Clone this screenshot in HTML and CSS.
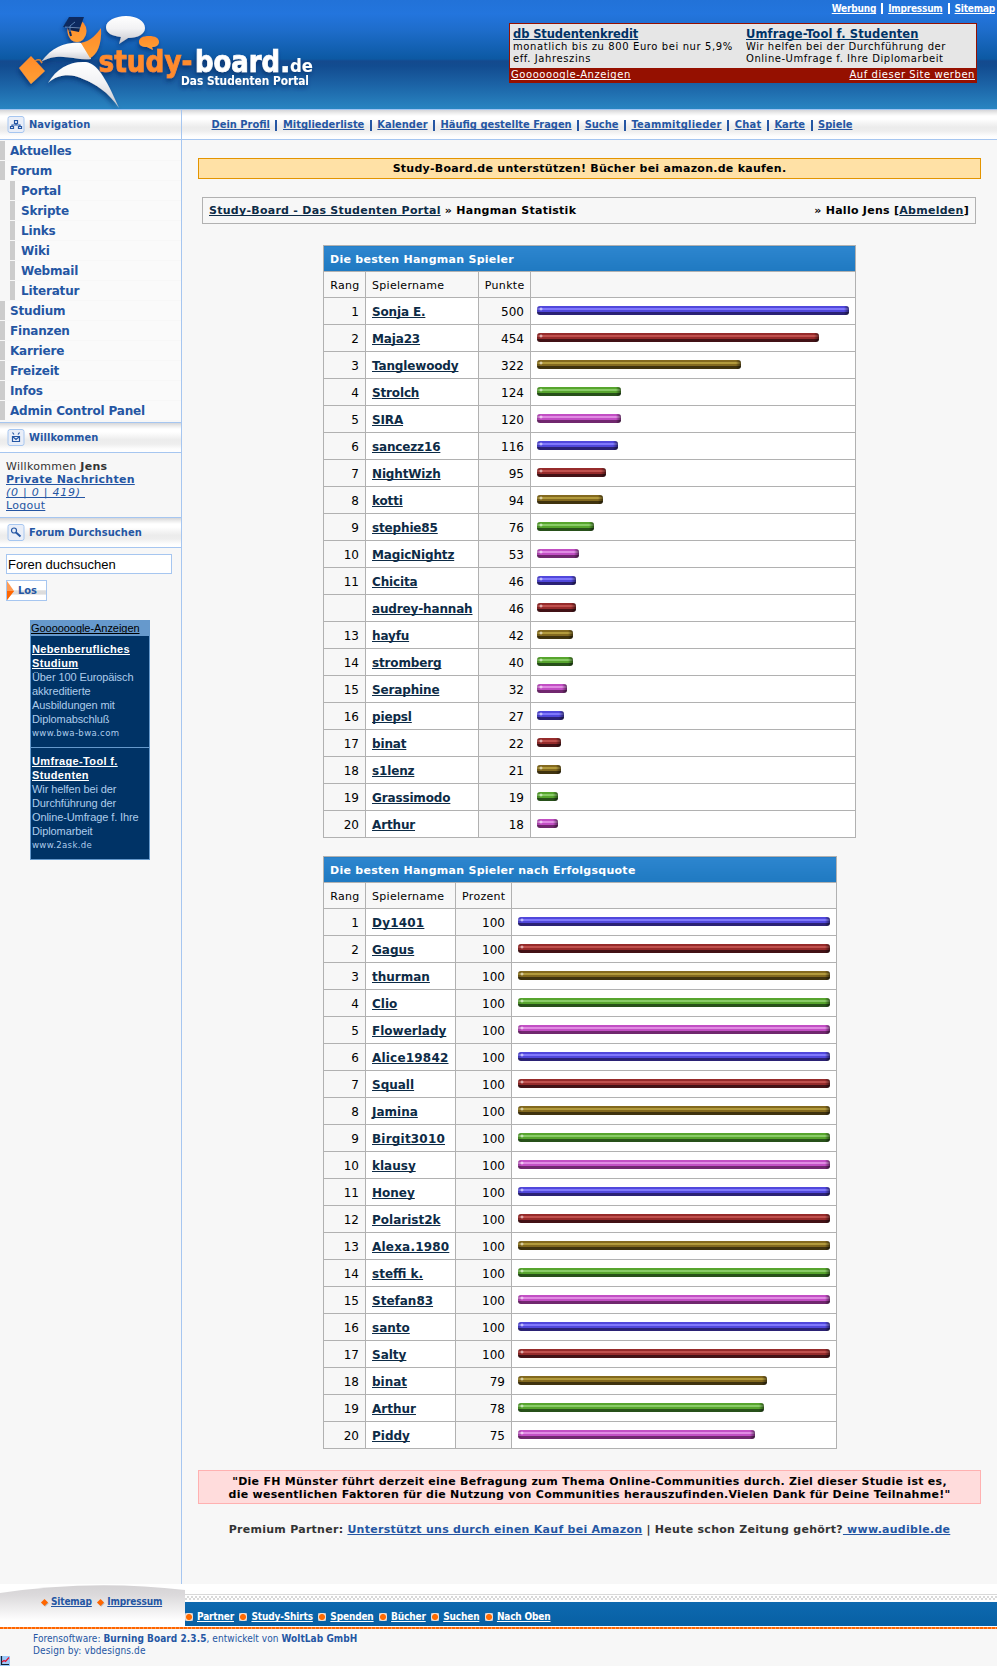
FILE: index.html
```
<!DOCTYPE html>
<html lang="de">
<head>
<meta charset="utf-8">
<title>Study-Board - Hangman Statistik</title>
<link rel="stylesheet" href="styles.css">
</head>
<body>
<header class="top">
  <svg class="logo" width="330" height="109" viewBox="0 0 330 109">
    <defs>
      <linearGradient id="wg" x1="0" y1="0" x2="0" y2="1"><stop offset="0" stop-color="#fff"/><stop offset=".45" stop-color="#f2f2f4"/><stop offset="1" stop-color="#c4c5cc"/></linearGradient>
      <linearGradient id="og" x1="0" y1="0" x2="0" y2="1"><stop offset="0" stop-color="#ff8a2a"/><stop offset="1" stop-color="#ffa033"/></linearGradient>
      <filter id="sh" x="-10%" y="-10%" width="120%" height="130%"><feDropShadow dx="-1" dy="3" stdDeviation="2" flood-color="#042a66" flood-opacity=".65"/></filter>
    </defs>
    <g filter="url(#sh)">
      <path d="M41 62C53 46 66 42 81 43C86 47 90 53 91 59C75 61 60 51 41 62Z" fill="url(#wg)"/>
      <path d="M81 43C91 41 97 34 101 28C102 44 97 55 90 58Z" fill="url(#og)"/>
      <path d="M48 83C57 68 70 61 86 62C97 64 105 76 119 108C108 92 96 84 83 79C73 74 59 73 48 83Z" fill="url(#wg)"/>
      <path d="M31 56L45 71L31 84L19 68Z" fill="url(#og)"/>
      <path d="M35 61Q37 59 40 60L42 63" fill="none" stroke="#d98235" stroke-width="1.5"/>
      <ellipse cx="77" cy="31" rx="9.5" ry="11" fill="url(#og)"/>
      <path d="M69 17L84 17L80 28L63 27Z" fill="#0b2c60"/>
      <path d="M67 27L80 28L79 32L69 30Z" fill="#09234f"/>
      <path d="M74 22L69 28L71 36" fill="none" stroke="#0b2c60" stroke-width="2"/>
      <path d="M65 27L80 28M75 22L70 26V32" fill="none" stroke="#7aa0d6" stroke-width=".7"/>
      <path d="M126 16C137 16 145 21 145 28C145 34 138 38 128 38L119 44L121 37C112 36 106 33 106 27C106 21 115 16 126 16Z" fill="url(#wg)"/>
      <path d="M149 36C155 36 159 38 159 42C159 45 156 47 152 47L153 50L147 47C142 47 139 45 139 42C139 38 143 36 149 36Z" fill="url(#og)"/>
      <text class="lg" x="98.500" y="71.500" font-size="30" fill="#ff8b2d" stroke="#ff8b2d" stroke-width=".7" textLength="94" lengthAdjust="spacingAndGlyphs">study-</text>
      <text class="lg" x="195" y="71.500" font-size="30" fill="#fff" stroke="#fff" stroke-width=".7" textLength="95" lengthAdjust="spacingAndGlyphs">board.</text>
      <text class="lg" x="290" y="71.500" font-size="18" fill="#fff" textLength="23" lengthAdjust="spacingAndGlyphs">de</text>
      <text class="lg" x="181" y="85" font-size="12" fill="#fff" textLength="128" lengthAdjust="spacingAndGlyphs">Das Studenten Portal</text>
    </g>
  </svg>
  <div class="topright">
    <div class="toplinks"><a>Werbung</a><i></i><a>Impressum</a><i></i><a>Sitemap</a></div>
    <div class="ad">
      <div class="adbody">
        <div class="adcol c1"><a>db Studentenkredit</a><p>monatlich bis zu 800 Euro bei nur 5,9%<br>eff. Jahreszins</p></div>
        <div class="adcol c2"><a>Umfrage-Tool f. Studenten</a><p>Wir helfen bei der Durchführung der<br>Online-Umfrage f. Ihre Diplomarbeit</p></div>
      </div>
      <div class="adfoot"><a>Goooooogle-Anzeigen</a><a>Auf dieser Site werben</a></div>
    </div>
  </div>
</header>
<div class="cols">
<aside>
  <h2><svg width="18" height="17" viewBox="0 0 18 17"><rect class="ib" x="1" y=".5" width="16" height="16" rx="2"/><path class="is" d="M7.500 4.500h3v3h-3zM3.500 10.500h3v2h-3zM11.500 10.500h3v2h-3zM9 7.500v1.500M5 10.500v-1.500h8v1.500"/></svg><span>Navigation</span></h2>
  <ul class="nav">
    <li>Aktuelles</li><li>Forum</li><li class="sub">Portal</li><li class="sub">Skripte</li><li class="sub">Links</li><li class="sub">Wiki</li><li class="sub">Webmail</li><li class="sub">Literatur</li><li>Studium</li><li>Finanzen</li><li>Karriere</li><li>Freizeit</li><li>Infos</li><li>Admin Control Panel</li>
  </ul>
  <h2 class="bt"><svg width="18" height="17" viewBox="0 0 18 17"><rect class="ib" x="1" y=".5" width="16" height="16" rx="2"/><path class="is" d="M5.500 7.500h7v5h-7zM5.500 7.500l3.500 3 3.500-3M5.500 3.500l1.500 2M12.500 3.500l-1.500 2"/></svg><span>Willkommen</span></h2>
  <div class="welcome"><div class="hi">Willkommen <b>Jens</b></div><a class="pn">Private Nachrichten</a><a class="em">(0 | 0 | 419)&nbsp;</a><a class="lo">Logout</a></div>
  <h2 class="bt"><svg width="18" height="17" viewBox="0 0 18 17"><rect class="ib" x="1" y=".5" width="16" height="16" rx="2"/><circle class="is" cx="7" cy="6.500" r="2.500"/><path d="M9 8.500l4.500 4" stroke="#2556a3" stroke-width="2"/></svg><span>Forum Durchsuchen</span></h2>
  <div class="search"><div class="inp"><span>Foren duchsuchen</span></div><div class="btn"><svg width="8" height="19" viewBox="0 0 8 19"><path d="M0 0L7 10L0 19Z" fill="#ff9a52"/><path d="M0 10H7L0 19Z" fill="#f60"/></svg><span>Los</span></div></div>
  <div class="sky">
    <a class="skh">Goooooogle-Anzeigen</a>
    <div class="sk s1"><b>Nebenberufliches<br>Studium</b><p>Über 100 Europäisch<br>akkreditierte<br>Ausbildungen mit<br>Diplomabschluß</p><small>www.bwa-bwa.com</small></div>
    <div class="sk s2"><b>Umfrage-Tool f.<br>Studenten</b><p>Wir helfen bei der<br>Durchführung der<br>Online-Umfrage f. Ihre<br>Diplomarbeit</p><small class="w2">www.2ask.de</small></div>
  </div>
</aside>
<main>
  <nav class="menu"><a>Dein Profil</a><i></i><a>Mitgliederliste</a><i></i><a>Kalender</a><i></i><a>Häufig gestellte Fragen</a><i></i><a>Suche</a><i></i><a class="wide">Teammitglieder</a><i></i><a class="wide">Chat</a><i></i><a>Karte</a><i></i><a>Spiele</a></nav>
  <div class="support">Study-Board.de unterstützen! Bücher bei amazon.de kaufen.</div>
  <div class="crumb"><span><a>Study-Board - Das Studenten Portal</a> » Hangman Statistik</span><span>» Hallo Jens [<a>Abmelden</a>]</span></div>
  <table class="stat t1">
    <colgroup><col class="ca"><col class="cb"><col class="cc"><col class="cd"></colgroup>
    <tr class="ti"><th colspan="4">Die besten Hangman Spieler</th></tr>
    <tr class="hd"><td>Rang</td><td>Spielername</td><td>Punkte</td><td></td></tr>
    <tr><td>1</td><td><a>Sonja E.</a></td><td>500</td><td><div class="bar bl" style="width:312px"></div></td></tr>
    <tr><td>2</td><td><a>Maja23</a></td><td>454</td><td><div class="bar re" style="width:282px"></div></td></tr>
    <tr><td>3</td><td><a>Tanglewoody</a></td><td>322</td><td><div class="bar go" style="width:204px"></div></td></tr>
    <tr><td>4</td><td><a>Strolch</a></td><td>124</td><td><div class="bar gr" style="width:84px"></div></td></tr>
    <tr><td>5</td><td><a>SIRA</a></td><td>120</td><td><div class="bar pi" style="width:84px"></div></td></tr>
    <tr><td>6</td><td><a>sancezz16</a></td><td>116</td><td><div class="bar bl" style="width:81px"></div></td></tr>
    <tr><td>7</td><td><a>NightWizh</a></td><td>95</td><td><div class="bar re" style="width:69px"></div></td></tr>
    <tr><td>8</td><td><a>kotti</a></td><td>94</td><td><div class="bar go" style="width:66px"></div></td></tr>
    <tr><td>9</td><td><a>stephie85</a></td><td>76</td><td><div class="bar gr" style="width:57px"></div></td></tr>
    <tr><td>10</td><td><a>MagicNightz</a></td><td>53</td><td><div class="bar pi" style="width:42px"></div></td></tr>
    <tr><td>11</td><td><a>Chicita</a></td><td>46</td><td><div class="bar bl" style="width:39px"></div></td></tr>
    <tr><td></td><td><a>audrey-hannah</a></td><td>46</td><td><div class="bar re" style="width:39px"></div></td></tr>
    <tr><td>13</td><td><a>hayfu</a></td><td>42</td><td><div class="bar go" style="width:36px"></div></td></tr>
    <tr><td>14</td><td><a>stromberg</a></td><td>40</td><td><div class="bar gr" style="width:36px"></div></td></tr>
    <tr><td>15</td><td><a>Seraphine</a></td><td>32</td><td><div class="bar pi" style="width:30px"></div></td></tr>
    <tr><td>16</td><td><a>piepsl</a></td><td>27</td><td><div class="bar bl" style="width:27px"></div></td></tr>
    <tr><td>17</td><td><a>binat</a></td><td>22</td><td><div class="bar re" style="width:24px"></div></td></tr>
    <tr><td>18</td><td><a>s1lenz</a></td><td>21</td><td><div class="bar go" style="width:24px"></div></td></tr>
    <tr><td>19</td><td><a>Grassimodo</a></td><td>19</td><td><div class="bar gr" style="width:21px"></div></td></tr>
    <tr><td>20</td><td><a>Arthur</a></td><td>18</td><td><div class="bar pi" style="width:21px"></div></td></tr>
  </table>
  <table class="stat t2">
    <colgroup><col class="ca"><col class="cb"><col class="cc"><col class="cd"></colgroup>
    <tr class="ti"><th colspan="4">Die besten Hangman Spieler nach Erfolgsquote</th></tr>
    <tr class="hd"><td>Rang</td><td>Spielername</td><td>Prozent</td><td></td></tr>
    <tr><td>1</td><td><a class="num">Dy1401</a></td><td>100</td><td><div class="bar bl" style="width:312px"></div></td></tr>
    <tr><td>2</td><td><a>Gagus</a></td><td>100</td><td><div class="bar re" style="width:312px"></div></td></tr>
    <tr><td>3</td><td><a>thurman</a></td><td>100</td><td><div class="bar go" style="width:312px"></div></td></tr>
    <tr><td>4</td><td><a>Clio</a></td><td>100</td><td><div class="bar gr" style="width:312px"></div></td></tr>
    <tr><td>5</td><td><a>Flowerlady</a></td><td>100</td><td><div class="bar pi" style="width:312px"></div></td></tr>
    <tr><td>6</td><td><a class="num">Alice19842</a></td><td>100</td><td><div class="bar bl" style="width:312px"></div></td></tr>
    <tr><td>7</td><td><a>Squall</a></td><td>100</td><td><div class="bar re" style="width:312px"></div></td></tr>
    <tr><td>8</td><td><a>Jamina</a></td><td>100</td><td><div class="bar go" style="width:312px"></div></td></tr>
    <tr><td>9</td><td><a class="num">Birgit3010</a></td><td>100</td><td><div class="bar gr" style="width:312px"></div></td></tr>
    <tr><td>10</td><td><a>klausy</a></td><td>100</td><td><div class="bar pi" style="width:312px"></div></td></tr>
    <tr><td>11</td><td><a>Honey</a></td><td>100</td><td><div class="bar bl" style="width:312px"></div></td></tr>
    <tr><td>12</td><td><a>Polarist2k</a></td><td>100</td><td><div class="bar re" style="width:312px"></div></td></tr>
    <tr><td>13</td><td><a class="num">Alexa.1980</a></td><td>100</td><td><div class="bar go" style="width:312px"></div></td></tr>
    <tr><td>14</td><td><a>steffi k.</a></td><td>100</td><td><div class="bar gr" style="width:312px"></div></td></tr>
    <tr><td>15</td><td><a>Stefan83</a></td><td>100</td><td><div class="bar pi" style="width:312px"></div></td></tr>
    <tr><td>16</td><td><a>santo</a></td><td>100</td><td><div class="bar bl" style="width:312px"></div></td></tr>
    <tr><td>17</td><td><a>Salty</a></td><td>100</td><td><div class="bar re" style="width:312px"></div></td></tr>
    <tr><td>18</td><td><a>binat</a></td><td>79</td><td><div class="bar go" style="width:249px"></div></td></tr>
    <tr><td>19</td><td><a>Arthur</a></td><td>78</td><td><div class="bar gr" style="width:246px"></div></td></tr>
    <tr><td>20</td><td><a>Piddy</a></td><td>75</td><td><div class="bar pi" style="width:237px"></div></td></tr>
  </table>
  <div class="survey"><div>"Die FH Münster führt derzeit eine Befragung zum Thema Online-Communities durch. Ziel dieser Studie ist es,</div><div class="l2">die wesentlichen Faktoren für die Nutzung von Communities herauszufinden.Vielen Dank für Deine Teilnahme!"</div></div>
  <div class="premium">Premium Partner: <a>Unterstützt uns durch einen Kauf bei Amazon</a> | Heute schon Zeitung gehört?<a>&nbsp;www.audible.de</a></div>
</main>
</div>
<footer>
  <div class="foot">
    <div class="fl">
      <svg class="arc" width="185" height="42" viewBox="0 0 185 42"><defs><linearGradient id="fg" x1="0" y1="0" x2="0" y2="1"><stop offset="0" stop-color="#d4d2d4"/><stop offset=".25" stop-color="#dcdadc"/><stop offset=".85" stop-color="#fff"/></linearGradient></defs><path d="M0 8Q92 -6 185 5V42H0Z" fill="url(#fg)"/></svg>
      <div class="fll"><b></b><a>Sitemap</a><b></b><a>Impressum</a></div>
    </div>
    <div class="fr">
      <div class="line"></div><div class="dots"></div>
      <div class="blue"><b></b><a>Partner</a><b></b><a>Study-Shirts</a><b></b><a>Spenden</a><b></b><a>Bücher</a><b></b><a>Suchen</a><b></b><a>Nach Oben</a></div>
    </div>
  </div>
  <div class="orange"></div>
  <div class="copy"><div class="p1">Forensoftware: <b>Burning Board 2.3.5</b>, entwickelt von <b>WoltLab GmbH</b></div><div class="p2">Design by: vbdesigns.de</div></div>
  <svg class="cnt" width="10" height="10" viewBox="0 0 10 10"><rect width="10" height="10" fill="#9cc8f8"/><path d="M1.500 0V8.500H9" fill="none" stroke="#123" stroke-width="1.200"/><path d="M2 6L4 4.500L5.500 5.500L9 1.500" fill="none" stroke="#e01030" stroke-width="1.200"/></svg>
</footer>
</body>
</html>
```
FILE: styles.css
```
* { box-sizing: border-box; }
body { margin: 0; width: 997px; height: 1666px; background: #f7f7f7; font-family: "DejaVu Sans", Verdana, sans-serif; font-size: 11px; color: #000; overflow: hidden; }
p, h2, ul { margin: 0; padding: 0; }
a { text-decoration: underline; text-decoration-thickness: 1px; text-underline-offset: 1px; text-decoration-skip-ink: none; }
div, nav, h2, th, td, li { white-space: nowrap; }

.top { height: 110px; display: flex; justify-content: space-between; border-bottom: 1px solid #a0c4f2; background: linear-gradient(#2272d8 0, #2375dd 14px, #1e6dcb 30px, #0c59a3 59px, #144a8e 61px, #124c90 66px, #1b62a5 84px, #2985c2 109px); }
.logo { display: block; }
.lg { font-family: "DejaVu Sans Condensed", "DejaVu Sans", sans-serif; font-weight: bold; }
.topright { width: 488px; }
.toplinks { display: flex; justify-content: flex-end; align-items: center; height: 15px; padding: 1px 2px 0 0; margin-bottom: 8px; color: #fff; font: bold 10px/13px "DejaVu Sans Condensed", sans-serif; letter-spacing: -.2px; }
.toplinks i, .menu i { width: 2px; height: 11px; background: currentColor; margin: 0 5px; }
.menu i { margin: 0 5.500px; }
.ad { width: 468px; height: 60px; border: 1px solid #951000; background: #951000; font-size: 10px; line-height: 12px; }
.adbody { height: 44px; background: #e6e6e6; display: flex; padding: 4px 3px 0; }
.adcol { font-size: 10px; letter-spacing: .6px; }
.c1 { width: 233px; }
.c2 { letter-spacing: .53px; }
.adcol a { display: block; color: #003366; font-size: 11.500px; line-height: 13px; font-weight: bold; letter-spacing: -.1px; }
.c2 a { letter-spacing: .13px; }
.adfoot { height: 14px; display: flex; justify-content: space-between; padding: 1px 1px 0; color: #fff; font-size: 10px; letter-spacing: .55px; }

.cols { display: flex; height: 1474px; }
aside { width: 182px; border-right: 1px solid #a6c6f0; flex: none; }
h2, .menu { height: 30px; display: flex; align-items: center; border-bottom: 1px solid #a6c6f0; background: linear-gradient(#d6d6d8 0, #ededed 3px, #fff 6px, #fff 9px, #ececec 17px, #eee 21px, #fdfdfd 26px, #fff 29px); color: #2556a3; font: bold 11px/14px "DejaVu Sans Condensed", sans-serif; }
h2 { padding: 0 0 1px 7px; gap: 4px; letter-spacing: .08px; }
h2 span { padding-top: 1px; }
h2.bt { height: 31px; border-top: 1px solid #a6c6f0; }
.ib { fill: #e9eef8; stroke: #a6c6f0; }
.is { fill: none; stroke: #2556a3; stroke-width: 1.200; }
.nav { list-style: none; padding: 1px 0; height: 282px; }
.nav li { height: 19px; margin-bottom: 1px; border-left: 5px solid #ccc; padding-left: 5px; font-weight: bold; font-size: 12px; line-height: 21px; letter-spacing: -.18px; color: #2556a3; background: #fafafa; }
.nav .sub { margin-left: 10px; padding-left: 6px; }
.welcome { height: 64px; padding: 7px 6px 0; display: flex; flex-direction: column; align-items: flex-start; color: #333; line-height: 13px; font-size: 11px; letter-spacing: .28px; }
.welcome a { color: #2556a3; }
.pn { font-weight: bold; }
.welcome .em { font-style: italic; letter-spacing: .75px; }
.search { padding: 6px 6px 0; }
.inp { width: 166px; height: 20px; border: 1px solid #a6c6f0; background: #fff; padding-left: 1px; font: 13px/19px "Liberation Sans", sans-serif; }
.btn { margin-top: 6px; width: 41px; height: 21px; border: 1px solid #a6c6f0; display: flex; align-items: center; gap: 3px; background: linear-gradient(#fff 45%, #ddd 52%, #dcdcdc 68%, #fff 76%); color: #2556a3; font: bold 11px/14px "DejaVu Sans Condensed", sans-serif; }
.sky { margin: 19px 0 0 30px; width: 120px; height: 240px; border: 1px solid #6699cc; background: #003366; font: 11px/14px "Liberation Sans", sans-serif; color: #aecceb; }
.skh { display: block; background: #6699cc; color: #000; height: 15px; line-height: 15px; letter-spacing: -.05px; }
.sk { height: 112px; padding: 6px 1px 0; letter-spacing: -.1px; }
.s1 { border-bottom: 1px solid #6699cc; }
.sk b { color: #fff; text-decoration: underline; text-decoration-skip-ink: none; display: block; letter-spacing: .35px; }
.sk small { font: 9.500px/13px "DejaVu Sans Condensed", sans-serif; display: block; letter-spacing: .35px; }

main { flex: 1; }
.menu { padding: 1px 0 0 29.500px; }
.wide { letter-spacing: .25px; }
.support, .crumb, .ti th, .survey, .premium { letter-spacing: .27px; }
.support { margin: 18px 16px 0; height: 21px; border: 1px solid #e39400; background: #ffe1a6; text-align: center; font-weight: bold; line-height: 20px; }
.crumb { margin: 18px 21px 0 20px; height: 27px; border: 1px solid #b1b1b1; padding: 0 6px; display: flex; justify-content: space-between; font-weight: bold; line-height: 26px; }
.crumb a, .stat a { color: #0d2b46; }
.stat { margin: 21px 0 0 141px; border-collapse: collapse; table-layout: fixed; font-size: 12px; }
.t1 { width: 533px; }
.t2 { width: 514px; margin-top: 18px; }
.ca { width: 42px; }
.t1 .cb { width: 113px; }
.t1 .cc { width: 52px; }
.t2 .cb { width: 90px; }
.t2 .cc { width: 56px; }
.stat th, .stat td { border: 1px solid #b1b1b1; padding: 2px 6px 0; line-height: 24px; }
.stat tr { height: 27px; }
.stat .ti, .stat .hd { height: 26px; font-size: 11px; }
.stat .ti th { background: linear-gradient(#2d86cf, #1f79c1); color: #fff; text-align: left; line-height: 23px; }
.stat td { background: #fff; text-align: right; font-size: 12px; }
.stat td:nth-child(odd) { background: #f7f7f7; }
.stat td:nth-child(2), .stat td:nth-child(4) { text-align: left; font-weight: bold; }
.stat td:nth-child(4) { padding-top: 0; }
.t1 td a { letter-spacing: -.15px; }
.t2 td .num { letter-spacing: .2px; }
.stat .hd td { background: #f7f7f7; font-weight: normal; font-size: 11px; line-height: 23px; letter-spacing: .3px; }
.stat .hd td:nth-child(odd) { padding-right: 5.500px; padding-left: 0; }
.bar { height: 9px; border-radius: 3px; margin-bottom: 2px; background: radial-gradient(circle at 4px 3px, #ffffffd0 0, #ffffff00 2px), linear-gradient(90deg, #0003, #0000 4px, #0000 calc(100% - 5px), #0008), linear-gradient(var(--a) 2px, var(--b) 2px, var(--b) 4px, var(--a) 4px, var(--a) 6px, var(--c) 6px); }
.bl { --a: #5148dc; --b: #8078fb; --c: #2b2275; }
.re { --a: #962b2b; --b: #c0504d; --c: #431216; }
.go { --a: #83691f; --b: #b29a3c; --c: #40330f; }
.gr { --a: #57a52e; --b: #89cb67; --c: #28511a; }
.pi { --a: #c24fc4; --b: #e08be2; --c: #71286f; }
.survey { margin: 21px 16px 0; height: 34px; border: 1px solid #ffb1b1; background: #ffdcdc; padding-top: 4px; text-align: center; font-weight: bold; line-height: 13px; font-size: 11px; }
.premium { margin-top: 18px; text-align: center; font-weight: bold; line-height: 15px; color: #333; font-size: 11px; }
.premium a { color: #2556a3; }

footer { height: 82px; background: #f7f7f7; }
.foot { height: 43px; display: flex; background: #fff; }
.fl { width: 185px; display: grid; padding-top: 1px; }
.arc, .fll { grid-area: 1 / 1; }
.fll { display: flex; align-items: center; height: 34px; padding-left: 41px; color: #2556a3; font: bold 10px/12px "DejaVu Sans Condensed", sans-serif; letter-spacing: -.15px; }
.fll b { width: 5px; height: 5px; margin: 0 4px 0 1px; background: #f60; transform: rotate(45deg); box-shadow: 1px 0 0 #bbb; }
.fll a { margin-right: 5.500px; }
.fr { flex: 1; padding-top: 10px; }
.line { height: 1px; background: #d8d8d8; margin-bottom: 1px; }
.dots { height: 4px; margin-bottom: 2px; background: conic-gradient(#dadada 25%, #fff 0 50%, #dadada 0 75%, #fff 0) 0 0 / 4px 4px; }
.blue { height: 24px; background: linear-gradient(#0e69b0, #0760a4); display: flex; align-items: center; padding-top: 5px; color: #fff; font: bold 10px/12px "DejaVu Sans Condensed", sans-serif; letter-spacing: -.16px; }
.blue b { width: 8px; height: 8px; margin-right: 4px; background: radial-gradient(circle, #ff6a00 0 2.500px, #f3dccb 3.500px 4px, #8aa9cf 5px); }
.blue a { margin-right: 5.500px; }
.orange { height: 2px; background: repeating-linear-gradient(90deg, #f60 0 3px, #ff9a55 3px 4px); }
.copy { padding: 4px 0 0 33px; height: 27px; color: #2556a3; font: 10px/12px "DejaVu Sans Condensed", sans-serif; letter-spacing: .06px; }
.p2 { letter-spacing: .12px; }
.cnt { display: block; }
```
